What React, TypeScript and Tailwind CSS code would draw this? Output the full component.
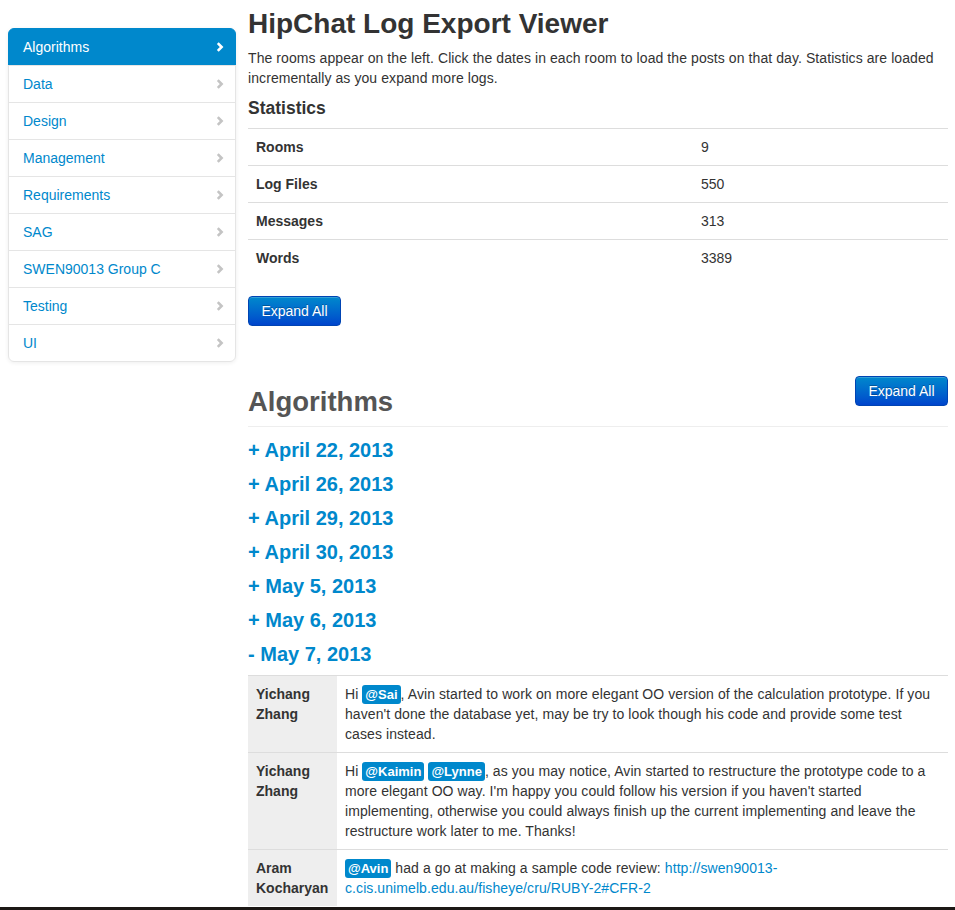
import React from 'react'

const rooms = ['Algorithms', 'Data', 'Design', 'Management', 'Requirements', 'SAG', 'SWEN90013 Group C', 'Testing', 'UI']

const stats = [
  { label: 'Rooms', value: '9' },
  { label: 'Log Files', value: '550' },
  { label: 'Messages', value: '313' },
  { label: 'Words', value: '3389' },
]

const dates = [
  { label: 'April 22, 2013', open: false },
  { label: 'April 26, 2013', open: false },
  { label: 'April 29, 2013', open: false },
  { label: 'April 30, 2013', open: false },
  { label: 'May 5, 2013', open: false },
  { label: 'May 6, 2013', open: false },
  { label: 'May 7, 2013', open: true },
]

function Chevron({ active }: { active?: boolean }) {
  return (
    <svg width="8" height="10" viewBox="0 0 8 10" className="shrink-0">
      <polyline
        points="1.8,1.2 5.6,5 1.8,8.8"
        fill="none"
        stroke={active ? '#ffffff' : '#c4c4c4'}
        strokeWidth="2.6"
        strokeLinejoin="miter"
      />
    </svg>
  )
}

function Mention({ name }: { name: string }) {
  return (
    <span className="inline-block rounded-[3px] bg-[#0088cc] px-[3px] py-[2px] align-baseline text-[13px] leading-[15px] font-bold tracking-normal text-white">
      @{name}
    </span>
  )
}

function ExpandButton() {
  return (
    <button className="h-[30px] w-[93px] rounded-[4px] border border-[#0044b3] bg-gradient-to-b from-[#0088cc] to-[#0044cc] text-[14px] leading-[20px] text-white [text-shadow:0_-1px_0_rgba(0,0,0,0.25)] shadow-[inset_0_1px_0_rgba(255,255,255,0.2)]">
      Expand All
    </button>
  )
}

export default function App() {
  return (
    <div className="bg-white font-['Liberation_Sans',Arial,sans-serif] text-[14px] leading-[20px] text-[#333]">
      <div className="h-[907px] overflow-hidden">
        <div className="ml-[8px] flex w-[940px] gap-[12px]">
          {/* Room list */}
          <div className="mt-[28px] w-[228px] shrink-0">
            <ul className="rounded-[6px] bg-white shadow-[0_1px_4px_rgba(0,0,0,0.065)]">
              {rooms.map((room, i) => {
                const active = i === 0
                return (
                  <li
                    key={room}
                    className={`-mt-px flex items-center justify-between border px-[14px] py-[8px] first:mt-0 ${
                      active
                        ? 'rounded-t-[6px] border-[#0088cc] bg-[#0088cc] text-white'
                        : 'border-[#e5e5e5] text-[#0088cc]'
                    } ${i === rooms.length - 1 ? 'rounded-b-[6px]' : ''}`}
                  >
                    <span>{room}</span>
                    <span className="-mr-[3px]">
                      <Chevron active={active} />
                    </span>
                  </li>
                )
              })}
            </ul>
          </div>

          {/* Main */}
          <div className="w-[700px] shrink-0">
            <h1 className="pt-[4px] text-[28px] leading-[40px] font-bold text-[#333]">HipChat Log Export Viewer</h1>
            <p className="mt-[4px] tracking-[0.08px]">
              The rooms appear on the left. Click the dates in each room to load the posts on that day. Statistics are loaded
              incrementally as you expand more logs.
            </p>
            <h4 className="mt-[10px] text-[17.5px] leading-[20px] font-bold">Statistics</h4>
            <div className="mt-[10px]">
              {stats.map((s) => (
                <div key={s.label} className="grid grid-cols-[445px_1fr] border-t border-[#dddddd]">
                  <div className="p-[8px] font-bold">{s.label}</div>
                  <div className="p-[8px]">{s.value}</div>
                </div>
              ))}
            </div>
            <div className="mt-[20px]">
              <ExpandButton />
            </div>

            {/* Room section */}
            <div className="mt-[50px] flex items-start justify-between border-b border-[#eeeeee] pb-[4px]">
              <h2 className="mt-[6px] text-[27.5px] leading-[40px] font-bold text-[#555]">Algorithms</h2>
              <ExpandButton />
            </div>
            <div className="mt-[6px]">
              {dates.map((d) => (
                <div key={d.label} className="text-[20px] leading-[34px] font-bold text-[#0088cc]">
                  {d.open ? '-' : '+'} {d.label}
                </div>
              ))}
            </div>

            <div className="mt-[4px]">
              <div className="grid grid-cols-[89px_1fr] border-t border-[#dddddd]">
                <div className="bg-[#eeeeee] p-[8px] font-bold">Yichang Zhang</div>
                <div className="p-[8px] tracking-[0.08px]">
                  Hi <Mention name="Sai" />, Avin started to work on more elegant OO version of the calculation prototype. If you
                  haven't done the database yet, may be try to look though his code and provide some test cases instead.
                </div>
              </div>
              <div className="grid grid-cols-[89px_1fr] border-t border-[#dddddd]">
                <div className="bg-[#eeeeee] p-[8px] font-bold">Yichang Zhang</div>
                <div className="p-[8px] tracking-[0.08px]">
                  Hi <Mention name="Kaimin" /> <Mention name="Lynne" />, as you may notice, Avin started to restructure the
                  prototype code to a more elegant OO way. I'm happy you could follow his version if you haven't started
                  implementing, otherwise you could always finish up the current implementing and leave the restructure work
                  later to me. Thanks!
                </div>
              </div>
              <div className="grid grid-cols-[89px_1fr] border-t border-[#dddddd]">
                <div className="bg-[#eeeeee] p-[8px] font-bold">Aram Kocharyan</div>
                <div className="p-[8px] tracking-[0.08px]">
                  <Mention name="Avin" /> had a go at making a sample code review:{' '}
                  <a className="text-[#0088cc]">http://swen90013-c.cis.unimelb.edu.au/fisheye/cru/RUBY-2#CFR-2</a>
                </div>
              </div>
            </div>
          </div>
        </div>
      </div>
      <div className="h-[3px] bg-[#1c1815]" />
    </div>
  )
}
